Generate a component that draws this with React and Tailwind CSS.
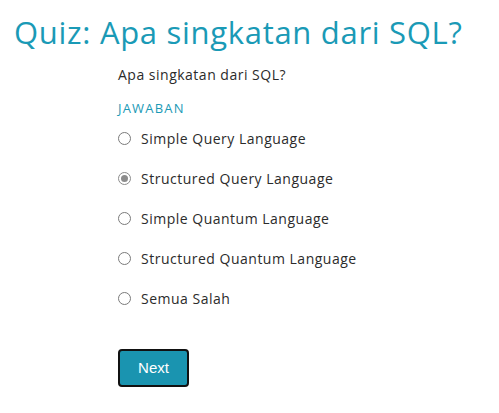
import { useState } from 'react';

const OPTIONS = [
  'Simple Query Language',
  'Structured Query Language',
  'Simple Quantum Language',
  'Structured Quantum Language',
  'Semua Salah',
];

function Radio({ checked }) {
  return (
    <span className={`w-[13px] h-[13px] rounded-full border flex items-center justify-center shrink-0 bg-white ${
      checked ? 'border-[#8c8c8c]' : 'border-[#7a7a7a]'
    }`}>
      {checked && <span className="w-[7px] h-[7px] rounded-full bg-[#8c8c8c]" />}
    </span>
  );
}

export default function App() {
  const [answer, setAnswer] = useState(1);

  return (
    <div className="w-[499px] h-[413px] bg-white font-['Open_Sans',sans-serif] text-[#222]">
      {/* Title */}
      <h1 className="pl-[14px] pt-[12px] text-[31px] tracking-[0.7px] leading-[40px] text-[#1a9ab6]">
        Quiz: Apa singkatan dari SQL?
      </h1>

      <div className="pl-[118px] pt-[13px]">
        <p className="text-[14px] tracking-[0.5px] leading-[20px] text-[#2b2b2b]">Apa singkatan dari SQL?</p>
        <p className="mt-[14px] text-[13px] tracking-[1.2px] leading-[18px] text-[#1a9ab6]">JAWABAN</p>

        <div className="mt-[1px] flex flex-col">
          {OPTIONS.map((opt, i) => (
            <label key={opt} onClick={() => setAnswer(i)}
              className="h-[40px] flex items-center gap-[10px] cursor-pointer">
              <Radio checked={answer === i} />
              <span className="text-[14px] tracking-[0.5px] text-[#2b2b2b]">{opt}</span>
            </label>
          ))}
        </div>

        <button type="button"
          className="mt-[31px] w-[71px] h-[38px] rounded-[4px] border-2 border-[#111] bg-[#1a94b0] text-white text-[15px] font-['Liberation_Sans',sans-serif]">
          Next
        </button>
      </div>
    </div>
  );
}
